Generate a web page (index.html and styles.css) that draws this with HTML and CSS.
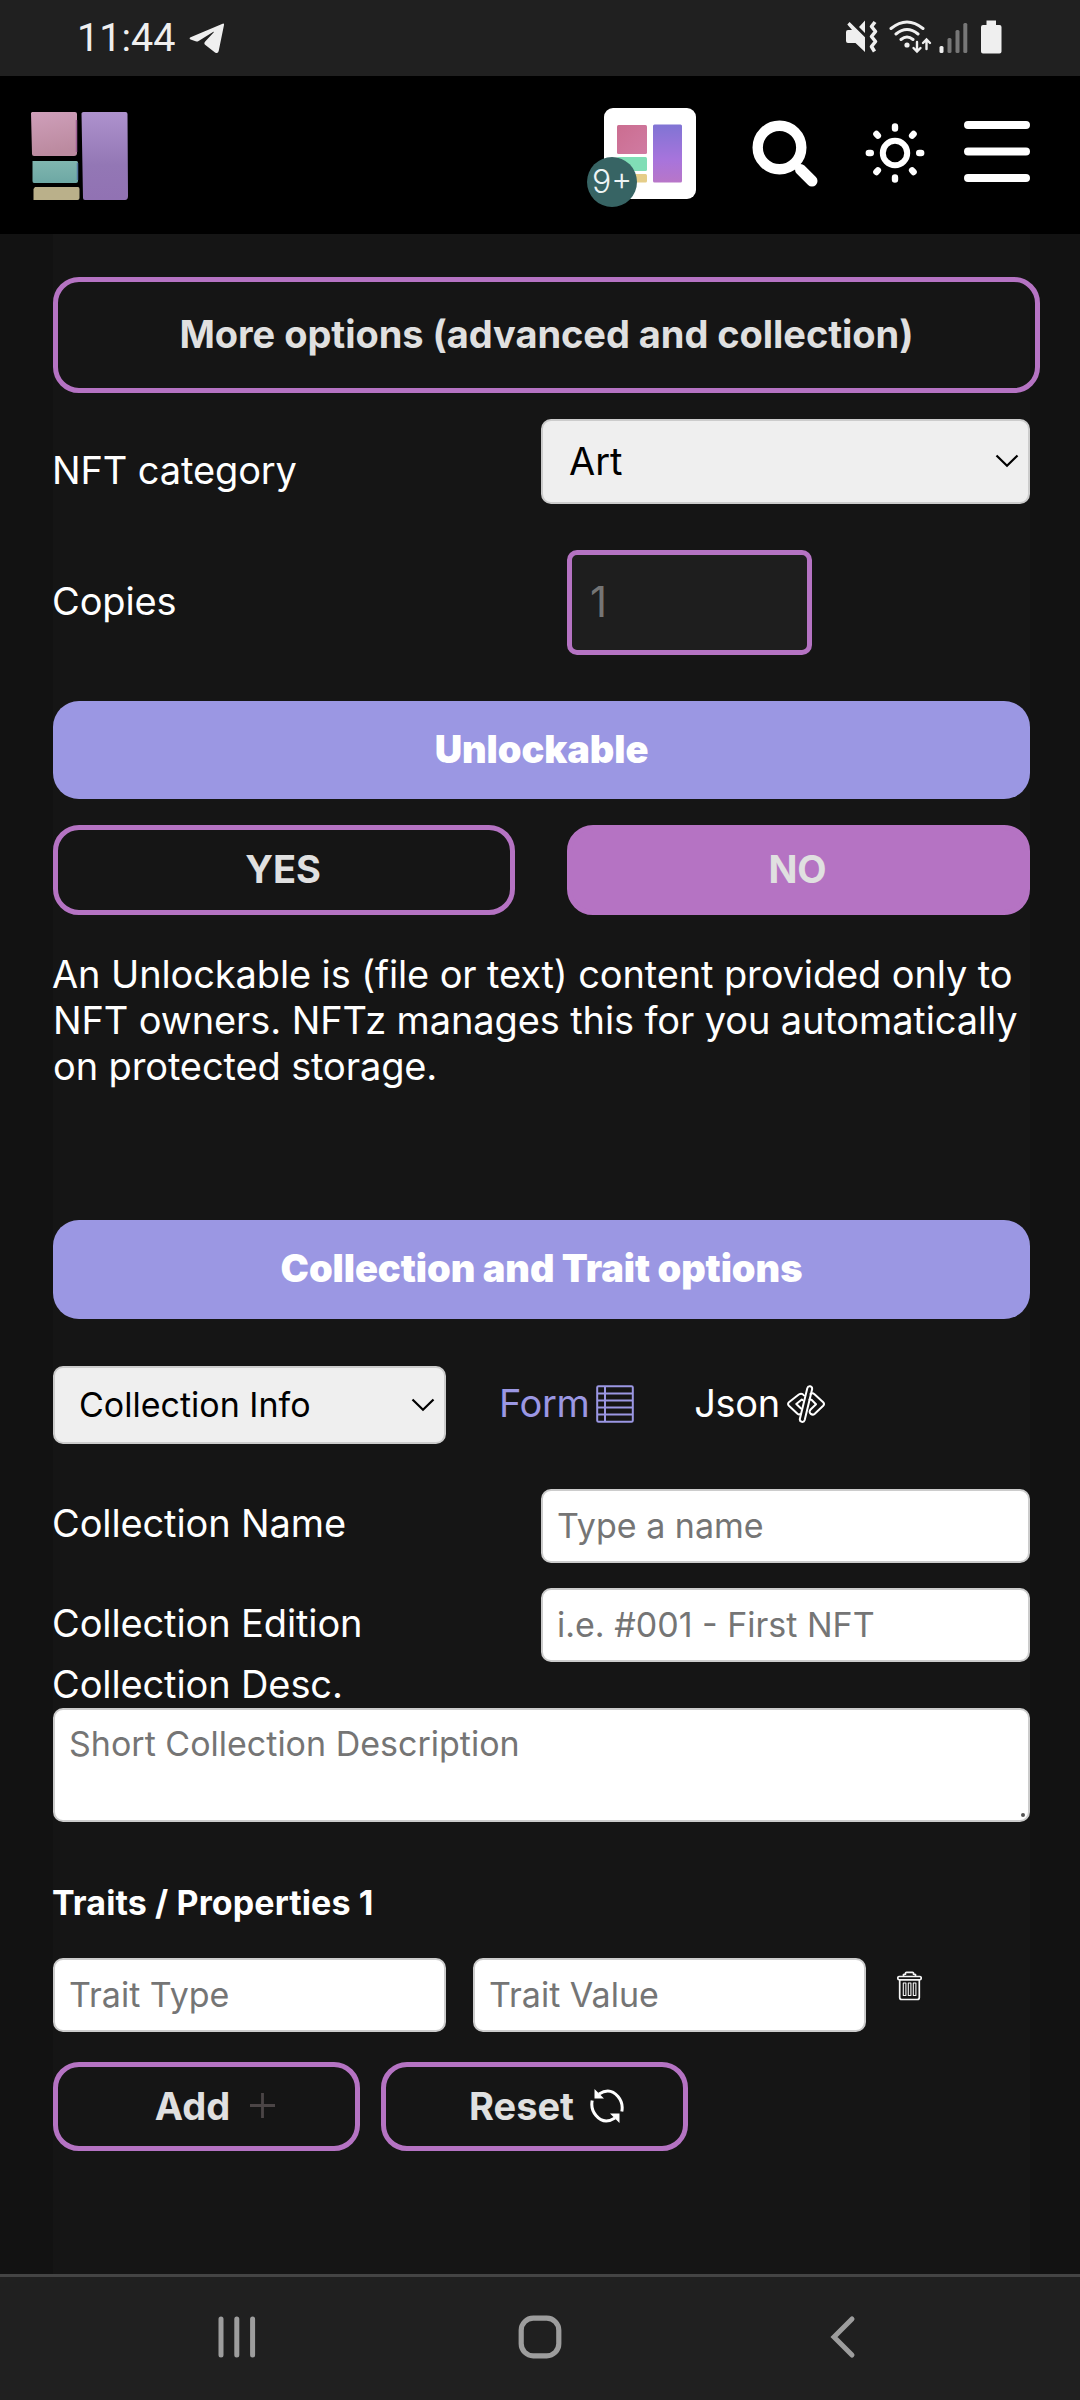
FILE: index.html
```html
<!DOCTYPE html>
<html lang="en">
<head>
<meta charset="utf-8">
<title>Create NFT</title>
<link rel="stylesheet" href="styles.css">
</head>
<body>
<div class="status-bar">
  <span class="clock">11:44</span>
  <svg class="telegram" width="36" height="31" viewBox="0 0 36 31"><path d="M33.6.7 1.6 14.2q-2 1.2 0 2.4l5 1.7q1.600.4 3-.4L24 8.900q1.500-.6.6.6L16.200 18.500q-1.800 2.100.2 3.600l9.600 7.400q3 1.500 3.700-1.400L35 2Q35.200.1 33.600.7z" fill="#efefef"/></svg>
  <svg class="system-icons" width="160" height="36" viewBox="0 0 160 36">
    <g fill="#efefef">
      <path d="M1 13q0-2 2-2h4L2.300 5.500 4.600 3 20 18.200V33L10.500 24H3q-2 0-2-2zM20 1.500V14l-6-6z"/>
      <path d="M30 2.500l-3.500 4.500 4 5-4 5 4 5-4 5 3 5" fill="none" stroke="#efefef" stroke-width="3.600" stroke-linejoin="round" transform="translate(0 .5)"/>
    </g>
    <g fill="none" stroke="#efefef" stroke-width="3" stroke-linecap="round">
      <path d="M46 9.500q16-13 32 0M51 15q11-9 22 0M56 20.500q6-5 12 0"/>
      <path d="M72 23v9M68.500 29l3.500 3.500 3.500-3.500M81.500 30v-9M78 24l3.500-3.500L85 24" stroke-width="2.400"/>
    </g>
    <circle cx="62" cy="26" r="2.600" fill="#efefef"/>
    <rect x="94.500" y="27" width="4" height="7" rx="1.500" fill="#efefef"/>
    <g fill="#777"><rect x="102.500" y="19" width="4" height="15" rx="1.500"/><rect x="110.500" y="11" width="4" height="23" rx="1.500"/><rect x="118.300" y="4" width="4" height="30" rx="1.500"/></g>
    <path d="M141.500 1.600h9.500V6h3.500q2 0 2 2v24.500q0 2-2 2H138q-2 0-2-2V8q0-2 2-2h3.500z" fill="#efefef"/>
  </svg>
</div>

<header class="site-header">
  <svg class="logo" width="100" height="92" viewBox="0 0 100 92">
    <defs>
      <linearGradient id="pink" x1="0" y1="0" x2=".2" y2="1"><stop offset="0" stop-color="#cf9fba"/><stop offset="1" stop-color="#bb8a9f"/></linearGradient>
      <linearGradient id="violet" x1="0" y1="0" x2="0" y2="1"><stop offset="0" stop-color="#ae92cd"/><stop offset=".6" stop-color="#9377b5"/><stop offset="1" stop-color="#9172b3"/></linearGradient>
      <linearGradient id="teal" x1="0" y1="0" x2="0" y2="1"><stop offset="0" stop-color="#80b6af"/><stop offset="1" stop-color="#6da8a4"/></linearGradient>
    </defs>
    <path d="M5 2h43q2 0 2 2v39q0 3-3 3H7q-2 0-2-2L4 3z" fill="url(#pink)"/>
    <path d="M49.500 10v32" stroke="#a06095" stroke-width="1.500"/>
    <path d="M5.500 51h44q1.500 0 1.500 2v18q0 2-2 2H7q-1.500 0-1.500-2z" fill="url(#teal)"/>
    <path d="M50.500 53v17" stroke="#5579a0" stroke-width="1.500"/>
    <path d="M8 77h43q1.500 0 1.500 2v9q0 2-2 2H6.500V79z" fill="#bab08a"/>
    <path d="M54.500 3.500q0-1.500 2-1.500h42q2 0 2 2l.5 82q0 4-3 4H58q-2 0-2-2z" fill="url(#violet)"/>
  </svg>
  <div class="header-tools">
    <div class="wallet">
      <svg width="92" height="91" viewBox="0 0 92 91">
        <defs>
          <linearGradient id="tile" x1="0" y1="0" x2="0" y2="1"><stop offset="0" stop-color="#8074d4"/><stop offset=".6" stop-color="#a774dc"/><stop offset="1" stop-color="#b876c8"/></linearGradient>
          <linearGradient id="rose" x1="0" y1="0" x2="1" y2="1"><stop offset="0" stop-color="#cb6d90"/><stop offset="1" stop-color="#d07ba2"/></linearGradient>
        </defs>
        <rect width="92" height="91" rx="9" fill="#fff"/>
        <rect x="13" y="17" width="30" height="29" rx="1.500" fill="url(#rose)"/>
        <rect x="13" y="49" width="30" height="14" rx="1.500" fill="#80deb6"/>
        <rect x="13" y="66" width="30" height="8.500" rx="1.500" fill="#e5cd88"/>
        <rect x="49" y="16.500" width="29" height="58" rx="1.500" fill="url(#tile)"/>
      </svg>
      <span class="badge">9+</span>
    </div>
    <svg class="search" width="68" height="68" viewBox="0 0 68 68"><g fill="none" stroke="#fff"><circle cx="27.500" cy="27.500" r="21.800" stroke-width="10.400"/><path d="M48.500 49.500 60 61" stroke-width="11" stroke-linecap="round"/></g></svg>
    <svg class="theme" width="60" height="62" viewBox="-30 -31 60 62"><g fill="none" stroke="#fff" stroke-width="6.400" stroke-linecap="round"><circle r="12.200" stroke-width="6"/><path d="M0-26.500v2M0 24.500v2M-26.200 0h2M24.200 0h2M-18.600-19l1.500 1.600M17.100 17.400l1.500 1.600M18.600-19l-1.500 1.600M-17.100 17.400l-1.500 1.600"/></g></svg>
    <svg class="menu" width="66" height="61" viewBox="0 0 66 61"><path d="M4 4h58M4 30.500h58M4 57h58" stroke="#fff" stroke-width="8" stroke-linecap="round"/></svg>
  </div>
</header>

<main class="page">
  <div class="form">
    <button class="btn more">More options (advanced and collection)</button>

    <div class="row category">
      <label for="cat">NFT category</label>
      <div class="select"><select id="cat"><option>Art</option></select><svg width="24" height="14" viewBox="0 0 24 14"><path d="M1.500 1.500 12 11.800 22.500 1.500"/></svg></div>
    </div>

    <div class="row copies">
      <label for="copies">Copies</label>
      <input id="copies" class="count" placeholder="1">
    </div>

    <h2 class="banner">Unlockable</h2>
    <div class="choice">
      <button class="btn">YES</button>
      <button class="btn active">NO</button>
    </div>
    <p class="hint">An Unlockable is (file or text) content provided only to NFT owners. NFTz manages this for you automatically on protected storage.</p>

    <h2 class="banner collection">Collection and Trait options</h2>
    <div class="tabs">
      <div class="select small"><select aria-label="Section"><option>Collection Info</option></select><svg width="24" height="14" viewBox="0 0 24 14"><path d="M1.500 1.500 12 11.800 22.500 1.500"/></svg></div>
      <span class="tab current">Form<svg width="38" height="38" viewBox="0 0 38 38"><path d="M2.500 1.200h33q1.300 0 1.300 1.300v33q0 1.300-1.300 1.300h-33q-1.300 0-1.300-1.300v-33q0-1.300 1.300-1.300zM9 1v36M1 8.500h36M1 15.500h36M1 22.500h36M1 29.500h36" fill="none" stroke="currentColor" stroke-width="2"/></svg></span>
      <span class="tab">Json<svg width="38" height="38" viewBox="0 0 38 38"><g fill="none" stroke="currentColor" stroke-width="2" stroke-linejoin="round" stroke-linecap="round"><path d="M20.300 3.200q.7-2.400 2.900-1.900t1.900 3L17.700 35q-.7 2.300-3 1.800t-1.800-3z"/><path d="M17 10.500q-2.200-3-5.200-1L1.900 17.300q-1.700 1.700 0 3.400l8.600 8q1.600 1.300 3 .2M15.800 15.300l-1-.8L9.300 19l4.700 4.500M23.500 9q2-1.500 4 .2l8.700 8.100q1.600 1.700 0 3.400l-8.400 8q-2 1.700-4 .2-2.300-2-.2-4.400L29 19.200l-4.500-4.500-2-.2"/></g></svg></span>
    </div>

    <div class="row field name">
      <label for="cname">Collection Name</label>
      <input id="cname" class="text" placeholder="Type a name">
    </div>
    <div class="row field edition">
      <label for="ced">Collection Edition</label>
      <input id="ced" class="text" placeholder="i.e. #001 - First NFT">
    </div>
    <label class="desc-label" for="cdesc">Collection Desc.</label>
    <div class="area"><textarea id="cdesc" class="text" placeholder="Short Collection Description"></textarea><i class="grip"></i></div>

    <h3 class="traits-title">Traits / Properties 1</h3>
    <div class="traits">
      <input class="text" aria-label="Trait type" placeholder="Trait Type">
      <input class="text" aria-label="Trait value" placeholder="Trait Value">
      <svg class="trash" width="25" height="30" viewBox="0 0 25 30"><g fill="none" stroke="#f5f5f5" stroke-width="1.700" stroke-linejoin="round"><path d="M2 5.500h21q1.200 0 1.200 1.500t-1.200 1.800H2Q.8 8.500.8 7T2 5.500zM6.500 5V3.500l2-.3V2q0-.7 1-.7h6q1 0 1 .7v1.200l2 .3V5M2.700 9v17.500q0 2 2 2h15.600q2 0 2-2V9"/><path d="M6.300 12h2.600v12.500H6.300zM11.300 12h2.600v12.500h-2.600zM16.300 12h2.600v12.500h-2.600z" stroke-width="1.100"/></g></svg>
    </div>
    <div class="actions">
      <button class="btn add">Add<svg class="plus" width="25" height="25" viewBox="0 0 25 25"><path d="M12.500 0v25M0 12.500h25" stroke="#4b4546" stroke-width="2.800"/></svg></button>
      <button class="btn reset">Reset<svg class="cycle" width="34" height="34" viewBox="0 0 34 34"><g fill="none" stroke="#fff" stroke-width="3"><path d="M9 5Q20-2 28 7.500 33.500 14 31.800 22.500"/><path d="M25 29Q14 36 6 26.500.5 20 2.200 11.500"/></g><path d="M4.500 0v9.500h9.500zM29.500 34v-9.500H20z" fill="#fff"/></svg></button>
    </div>
  </div>
</main>

<nav class="system-nav">
  <svg width="38" height="44" viewBox="0 0 38 44"><path d="M3 4v36M18.800 4v36M34.600 4v36" stroke="#9d9d9d" stroke-width="5" stroke-linecap="round"/></svg>
  <svg width="44" height="44" viewBox="0 0 44 44"><rect x="3.200" y="3.200" width="37.600" height="37.600" rx="12" fill="none" stroke="#9d9d9d" stroke-width="5.200"/></svg>
  <svg width="26" height="44" viewBox="0 0 26 44"><path d="M22 4 4 22l18 18" fill="none" stroke="#9d9d9d" stroke-width="5" stroke-linecap="round"/></svg>
</nav>
</body>
</html>
```
FILE: styles.css
```css
* { box-sizing: border-box; }

body {
  margin: 0;
  width: 1080px;
  height: 2400px;
  display: flex;
  flex-direction: column;
  overflow: hidden;
  background: #121212;
  color: #fff;
  font: 400 38px/46px Inter, sans-serif;
}

button, input, select, textarea { font: inherit; margin: 0; }
svg { display: block; flex: none; }
h2, h3, p { margin: 0; }

/* device status bar */
.status-bar {
  height: 76px;
  flex: none;
  display: flex;
  align-items: flex-start;
  padding: 0 75px 0 77px;
  background: #202020;
}
.clock {
  font: 400 39.5px/46px Roboto, sans-serif;
  color: #efefef;
  margin-top: 15px;
  width: 112px;
}
.telegram { margin-top: 23px; }
.system-icons { margin: 19px 0 0 auto; }

/* site header */
.site-header {
  height: 158px;
  flex: none;
  display: flex;
  justify-content: space-between;
  align-items: flex-start;
  padding: 0 50px 0 27px;
  background: #000;
}
.logo { margin-top: 34px; overflow: visible; }
.header-tools { display: flex; }
.wallet { position: relative; margin: 32px 56px 0 0; }
.badge {
  position: absolute;
  left: -17px;
  top: 49px;
  width: 50px;
  height: 50px;
  border-radius: 50%;
  background: #376464;
  color: #eef5f5;
  font-size: 32px;
  font-weight: 300;
  line-height: 50px;
  text-align: center;
}
.search { margin: 44px 45px 0 0; }
.theme { margin: 46px 39px 0 0; }
.menu { margin-top: 45px; }

/* page body */
.page { flex: 1; padding: 0 50px 0 53px; }
.form {
  height: 100%;
  padding-top: 43px;
  background: #151515;
  display: flex;
  flex-direction: column;
}

.btn {
  border: 5px solid #b573c3;
  border-radius: 26px;
  background: none;
  color: #e0e0e0;
  font-weight: 700;
  display: flex;
  justify-content: center;
  align-items: center;
  padding: 0 0 1px;
}
.btn.active { background: #b573c3; }
.more { height: 116px; margin-right: -10px; flex: none; padding-bottom: 2px; letter-spacing: -.05px; }

.row { display: grid; grid-template-columns: 488px 489px; align-items: start; }
.row label, .desc-label, .hint { text-indent: -1px; letter-spacing: -.12px; }

.select { position: relative; height: 85px; }
.select select {
  appearance: none;
  width: 100%;
  height: 100%;
  border: 2px solid #ccc;
  border-radius: 10px;
  background: #efefef;
  color: #000;
  padding: 0 26px 1px;
}
.select svg { position: absolute; right: 11px; top: 35px; fill: none; stroke: #000; stroke-width: 2.2px; }
.category { margin-top: 26px; }
.category label { padding-top: 28px; }

.copies { margin-top: 46px; }
.copies label { padding-top: 28px; }
.count {
  width: 245px;
  height: 105px;
  margin-left: 26px;
  padding: 0 18px 3px;
  border: 5px solid #b573c3;
  border-radius: 10px;
  background: #1e1e1e;
  color: #fff;
  font-size: 42px;
}
::placeholder { color: #757575; opacity: 1; }

.banner {
  height: 98px;
  flex: none;
  margin-top: 46px;
  padding-top: 25px;
  border-radius: 26px;
  background: #9b97e3;
  font-size: 38px;
  line-height: 46px;
  font-weight: 900;
  letter-spacing: -.08px;
  text-align: center;
}
.choice { display: grid; grid-template-columns: 462px 463px; gap: 52px; margin-top: 26px; }
.choice .btn { height: 90px; padding: 0 2px 2px 0; }
.hint { margin-top: 36px; }
.banner.collection { height: 99px; margin-top: 131px; }

.tabs { display: flex; align-items: flex-start; margin-top: 47px; height: 78px; }
.select.small { width: 393px; height: 78px; margin-right: 53px; font-size: 34px; }
.select.small select { padding: 0 24px 1px; }
.select.small svg { top: 32px; }
.tab { display: flex; margin-right: 60px; padding-top: 14px; letter-spacing: -.4px; }
.tab svg { margin: 5px 0 0 7px; }
.current { color: #9b97e3; }

.text {
  width: 100%;
  height: 74px;
  border: 2px solid #ccc;
  border-radius: 10px;
  background: #fff;
  color: #222;
  font-size: 34px;
  padding: 0 14px 2px;
}
.field label { padding-top: 11px; }
.name { margin-top: 45px; }
.edition { margin-top: 25px; }
.edition label { padding-top: 12px; }
.edition .text { padding-bottom: 1px; }
.desc-label { height: 47px; margin-top: -1px; }
.area { position: relative; height: 114px; }
.area textarea {
  display: block;
  height: 114px;
  padding: 11px 14px;
  resize: none;
  overflow: hidden;
}
.grip { position: absolute; right: 5px; bottom: 5px; width: 4px; height: 4px; border-radius: 50%; background: #555; }

.traits-title { margin-top: 58px; font-size: 34px; line-height: 46px; font-weight: 700; text-indent: -1px; letter-spacing: .1px; }
.traits { display: grid; grid-template-columns: 393px 393px 25px; column-gap: 27px; margin-top: 32px; }
.trash { margin: 13px 0 0 4px; }

.actions { display: flex; gap: 21px; margin-top: 30px; }
.actions .btn { width: 307px; height: 89px; padding-bottom: 2px; }
.plus { margin-left: 20px; }
.cycle { margin-left: 16px; }
.add { padding-left: 17px; }
.reset { padding-left: 24px; }

/* device navigation bar */
.system-nav {
  height: 126px;
  flex: none;
  display: grid;
  grid-template-columns: 300px 312px 26px;
  padding: 38px 0 0 218px;
  border-top: 3px solid #444;
  background: #202020;
}
```
